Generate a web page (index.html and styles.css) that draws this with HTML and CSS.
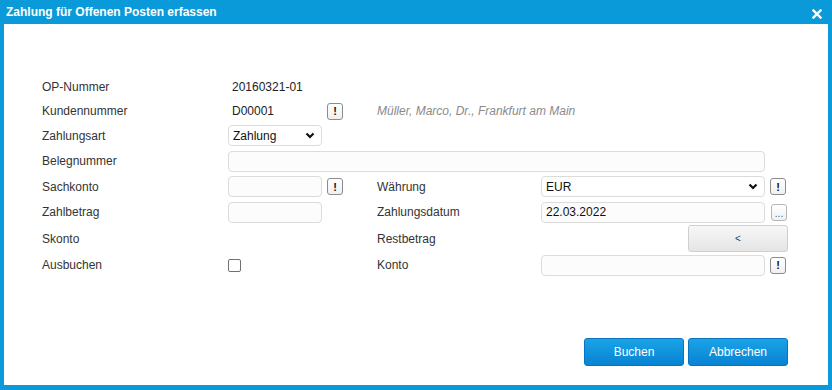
FILE: index.html
```html
<!DOCTYPE html>
<html lang="de">

<head>
	<meta name="viewport" content="width=device-width, initial-scale=1">
	<title>Zahlung für Offenen Posten erfassen</title>
	<link rel="stylesheet" href="styles.css">
</head>

<body>
	<div class="dialog">
		<header class="titlebar">
			<h1>Zahlung für Offenen Posten erfassen</h1>
			<button class="close" title="Schließen">
				<svg width="10" height="10" viewBox="0 0 10 10">
					<path d="M1.5 1.5 L8.5 8.5 M8.5 1.5 L1.5 8.5" stroke="#fff" stroke-width="2.4" stroke-linecap="square" />
				</svg>
			</button>
		</header>
		<main class="content">
			<form class="form">
				<label class="label">OP-Nummer</label>
				<span class="value">20160321-01</span>

				<label class="label">Kundennummer</label>
				<span class="value">D00001</span>
				<button type="button" class="btn-info">!</button>
				<span class="customer">Müller, Marco, Dr., Frankfurt am Main</span>

				<label class="label">Zahlungsart</label>
				<div class="select small">
					<span>Zahlung</span>
					<svg width="10" height="7" viewBox="0 0 10 7">
						<path d="M1.5 1.5 L5 5 L8.5 1.5" fill="none" stroke="#111" stroke-width="2.2" />
					</svg>
				</div>

				<label class="label">Belegnummer</label>
				<input class="input wide" type="text">

				<label class="label">Sachkonto</label>
				<input class="input small" type="text">
				<button type="button" class="btn-info">!</button>
				<label class="label-r">Währung</label>
				<div class="select">
					<span>EUR</span>
					<svg width="10" height="7" viewBox="0 0 10 7">
						<path d="M1.5 1.5 L5 5 L8.5 1.5" fill="none" stroke="#111" stroke-width="2.2" />
					</svg>
				</div>
				<button type="button" class="btn-info">!</button>

				<label class="label">Zahlbetrag</label>
				<input class="input small" type="text">
				<label class="label-r">Zahlungsdatum</label>
				<input class="input" type="text" value="22.03.2022">
				<button type="button" class="btn-dots">...</button>

				<label class="label">Skonto</label>
				<label class="label-r">Restbetrag</label>
				<button type="button" class="btn-rest">&lt;</button>

				<label class="label">Ausbuchen</label>
				<span class="check"></span>
				<label class="label-r">Konto</label>
				<input class="input" type="text">
				<button type="button" class="btn-info">!</button>
			</form>
			<div class="actions">
				<button type="button" class="btn-primary">Buchen</button>
				<button type="button" class="btn-primary">Abbrechen</button>
			</div>
		</main>
	</div>
</body>

</html>
```

FILE: styles.css
```css
* {
	box-sizing: border-box;
}

body,
html {
	margin: 0;
	font-family: "Liberation Sans", Arial, sans-serif;
	font-size: 12px;
	color: #333;
	background: #fff;
}

.dialog {
	width: 832px;
	height: 390px;
	display: flex;
	flex-direction: column;
	border: 4px solid #0a9ad9;
	border-top: 0;
	border-bottom-width: 5px;
	background: #fff;
}

.titlebar {
	height: 24px;
	margin: 0 -4px;
	padding: 0 10px 0 6px;
	display: flex;
	align-items: center;
	justify-content: space-between;
	background: #0a9ad9;
}

.titlebar h1 {
	margin: 0;
	font-size: 12px;
	font-weight: 700;
	color: #fff;
}

.close {
	border: 0;
	padding: 0;
	background: none;
	display: flex;
	margin-top: 3px;
}

.content {
	flex: 1;
	padding: 51px 40px 0 38px;
	display: flex;
	flex-direction: column;
}

.form {
	display: grid;
	grid-template-columns: 186px 94px 55px 164px 224px 23px;
	grid-template-rows: 24px 24px 25px 26px 25px 26px 27px 26px;
	align-items: center;
}

.label {
	grid-column: 1;
}

.label-r {
	grid-column: 4;
}

.value {
	padding-left: 4px;
	color: #222;
}

.customer {
	grid-column: 4 / 7;
	font-style: italic;
	color: #8a8a8a;
}

.input,
.select {
	height: 21px;
	border: 1px solid #dcdcdc;
	border-radius: 4px;
	background: #fcfcfc;
	font: inherit;
	color: #111;
	padding: 0 4px;
	outline: none;
}

.input.wide {
	grid-column: 2 / 6;
}

.small {
	width: 94px;
}

.select {
	display: flex;
	align-items: center;
	justify-content: space-between;
	padding-right: 6px;
	background: #fff;
}

.btn-info,
.btn-dots {
	justify-self: start;
	margin-left: 5px;
	width: 16px;
	height: 17px;
	padding: 0;
	border: 1px solid #8c8c8c;
	border-radius: 3px;
	background: linear-gradient(#fff, #f0f0f0);
	font: 700 11px "Liberation Sans", Arial, sans-serif;
	color: #111;
}

.btn-dots {
	margin-left: 6px;
	border-color: #b5b5b5;
	font-weight: 400;
	font-size: 10px;
	color: #2a5db0;
	line-height: 18px;
}

.btn-rest {
	grid-column: 5 / 7;
	justify-self: end;
	width: 100px;
	height: 27px;
	border: 1px solid #cfcfcf;
	border-radius: 3px;
	background: linear-gradient(#f7f7f7, #e5e5e5);
	font: 10px "Liberation Sans", Arial, sans-serif;
	color: #1d3f7a;
}

.check {
	width: 13px;
	height: 13px;
	border: 1px solid #707070;
	border-radius: 2px;
	background: #fff;
}

.actions {
	display: flex;
	justify-content: flex-end;
	gap: 4px;
	margin-top: 60px;
}

.btn-primary {
	width: 100px;
	height: 28px;
	border: 1px solid #0a74c2;
	border-radius: 3px;
	background: linear-gradient(#1ba3e6, #0783d3);
	font: 12px "Liberation Sans", Arial, sans-serif;
	color: #fff;
}
```
